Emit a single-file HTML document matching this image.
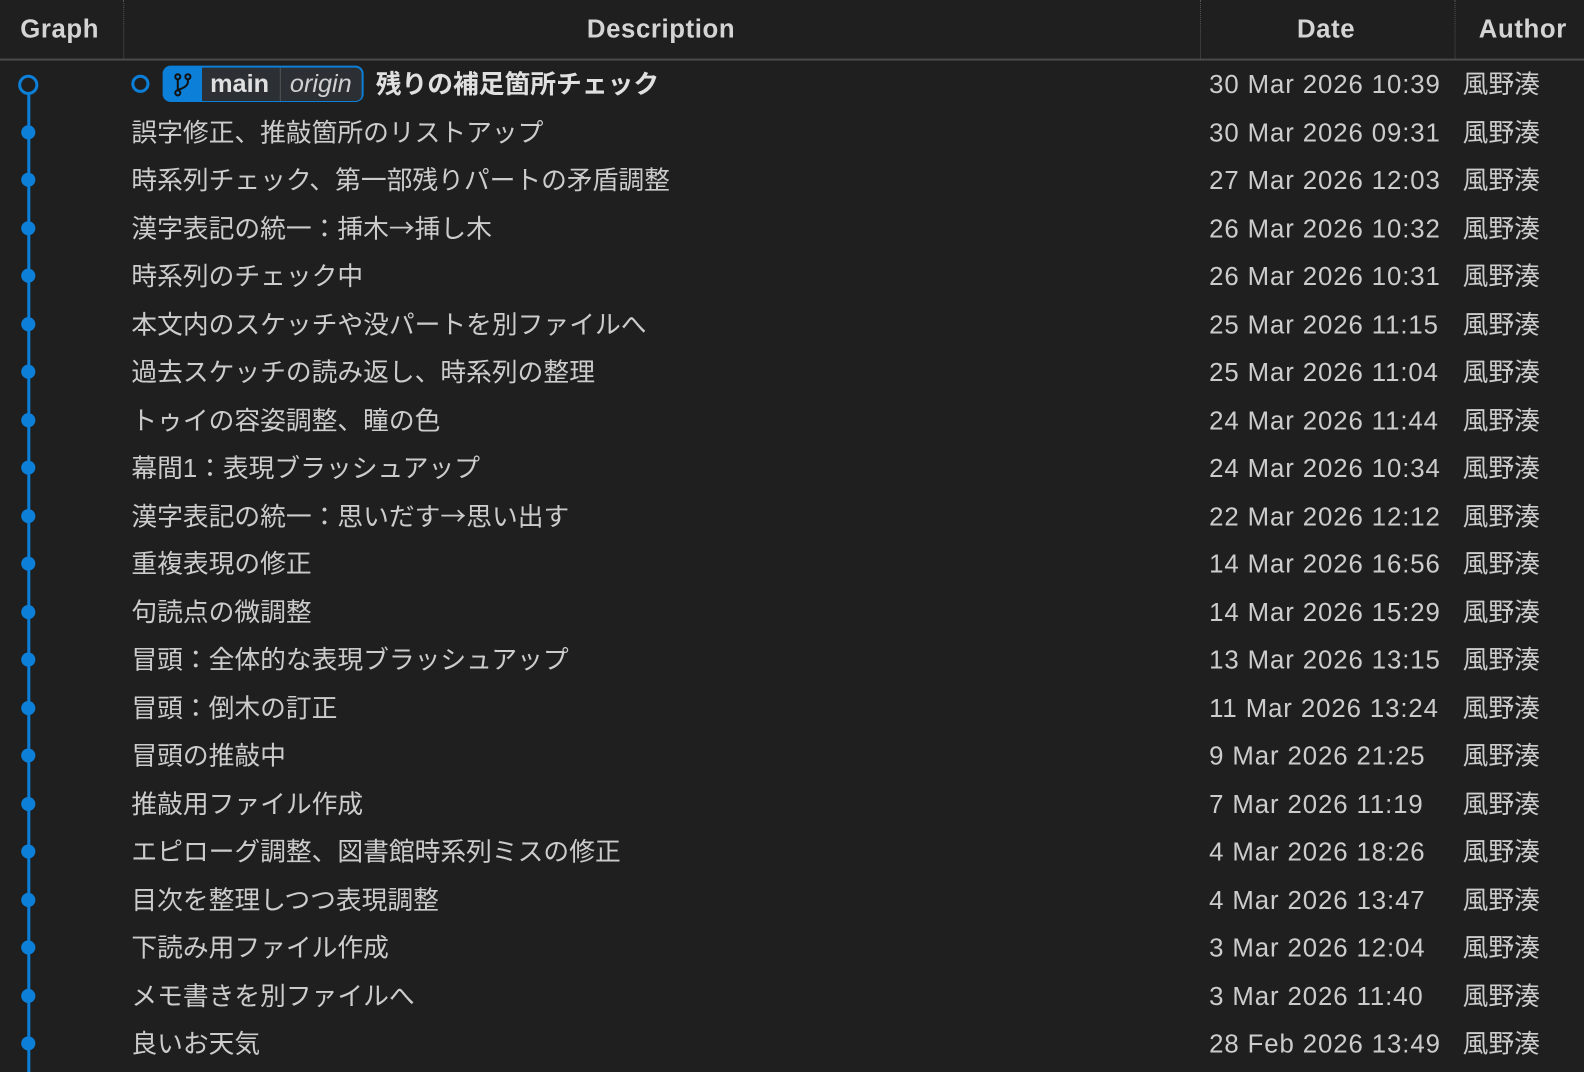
<!DOCTYPE html>
<html><head><meta charset="utf-8"><style>
html,body{margin:0;padding:0;background:#1f1f1f;width:1584px;height:1072px;overflow:hidden}
body{font-family:"Liberation Sans","Noto Sans CJK JP",sans-serif;color:#cccccc;position:relative}
#w{position:absolute;left:0;top:0;width:1570px;height:1062px;transform:scale(1.0101);transform-origin:0 0}
.h{position:absolute;top:0;height:58px;line-height:58px;font-weight:bold;font-size:25.5px;letter-spacing:0.6px;color:#d4d4d4}
.hl{position:absolute;top:58px;left:0;width:1600px;height:2px;background:#4a4a4a}
.sep{position:absolute;top:0;height:58px;border-left:1px dotted #555}
.r{position:absolute;left:0;width:1584px;height:47.5px;font-size:25.5px;line-height:47.5px;white-space:nowrap}
.d{position:absolute;left:130px;top:2px}
.t{position:absolute;left:1197px;top:2px;font-family:"Liberation Sans",sans-serif;letter-spacing:0.9px}
.a{position:absolute;left:1448px;top:2px}
.j{font-family:"Noto Sans CJK JP",sans-serif;line-height:0;vertical-align:baseline}
.dot{position:absolute;left:21px;top:16.5px;width:14px;height:14px;border-radius:50%;background:#0c7fd8}
.line{position:absolute;left:26.5px;width:3.5px;background:#0c7fd8}
.badge{position:absolute;left:161px;top:65px;width:199px;height:36px;border:1px solid #0c7fd8;border-radius:8px;background:#0c7fd8;box-sizing:border-box;overflow:hidden}
.bd{position:absolute;left:38px;top:1px;width:158px;height:33px;background:#2c3034;border-radius:0 6px 6px 0}
</style></head><body><div id="w">
<div class="h" style="left:20px">Graph</div>
<div class="h" style="left:581px">Description</div>
<div class="h" style="left:1284px">Date</div>
<div class="h" style="left:1464px">Author</div>
<div class="sep" style="left:122px"></div>
<div class="sep" style="left:1188px"></div>
<div class="sep" style="left:1440px"></div>
<div class="hl"></div>
<div class="line" style="top:93px;height:979px"></div>
<div style="position:absolute;left:18px;top:74px;width:14px;height:14px;border:3px solid #0c7fd8;border-radius:50%;background:#1f1f1f"></div>
<div style="position:absolute;left:130px;top:74px;width:12px;height:12px;border:3px solid #0c7fd8;border-radius:50%"></div>
<div class="badge"><svg style="position:absolute;left:8px;top:5px" width="22" height="26" viewBox="0 0 22 26"><g fill="none" stroke="#111" stroke-width="2"><circle cx="6" cy="5" r="2.5"/><circle cx="16" cy="5" r="2.5"/><circle cx="6" cy="21" r="2.5"/><path d="M6 7.5V18.5M16 7.5V10Q16 15 6 18"/></g></svg>
<div class="bd"><div style="position:absolute;left:8px;top:0;line-height:33px;font-weight:bold;font-size:25px;color:#e0e0e0">main</div><div style="position:absolute;left:77px;top:0;width:1px;height:33px;background:#555"></div><div style="position:absolute;left:87px;top:0;line-height:33px;font-style:italic;font-size:25px;color:#d0d0d0">origin</div></div></div>
<div class="r" style="top:59px"><span class="d" style="left:372px;font-weight:bold;color:#e0e0e0">残りの補足箇所チェック</span><span class="t">30 Mar 2026 10:39</span><span class="a">風野湊</span></div>
<div class="r" style="top:107px"><div class="dot"></div><span class="d">誤字修正、推敲箇所のリストアップ</span><span class="t">30 Mar 2026 09:31</span><span class="a">風野湊</span></div>
<div class="r" style="top:154px"><div class="dot"></div><span class="d">時系列チェック、第一部残りパートの矛盾調整</span><span class="t">27 Mar 2026 12:03</span><span class="a">風野湊</span></div>
<div class="r" style="top:202px"><div class="dot"></div><span class="d">漢字表記の統一：挿木<span class="j">→</span>挿し木</span><span class="t">26 Mar 2026 10:32</span><span class="a">風野湊</span></div>
<div class="r" style="top:249px"><div class="dot"></div><span class="d">時系列のチェック中</span><span class="t">26 Mar 2026 10:31</span><span class="a">風野湊</span></div>
<div class="r" style="top:297px"><div class="dot"></div><span class="d">本文内のスケッチや没パートを別ファイルへ</span><span class="t">25 Mar 2026 11:15</span><span class="a">風野湊</span></div>
<div class="r" style="top:344px"><div class="dot"></div><span class="d">過去スケッチの読み返し、時系列の整理</span><span class="t">25 Mar 2026 11:04</span><span class="a">風野湊</span></div>
<div class="r" style="top:392px"><div class="dot"></div><span class="d">トゥイの容姿調整、瞳の色</span><span class="t">24 Mar 2026 11:44</span><span class="a">風野湊</span></div>
<div class="r" style="top:439px"><div class="dot"></div><span class="d">幕間1：表現ブラッシュアップ</span><span class="t">24 Mar 2026 10:34</span><span class="a">風野湊</span></div>
<div class="r" style="top:487px"><div class="dot"></div><span class="d">漢字表記の統一：思いだす<span class="j">→</span>思い出す</span><span class="t">22 Mar 2026 12:12</span><span class="a">風野湊</span></div>
<div class="r" style="top:534px"><div class="dot"></div><span class="d">重複表現の修正</span><span class="t">14 Mar 2026 16:56</span><span class="a">風野湊</span></div>
<div class="r" style="top:582px"><div class="dot"></div><span class="d">句読点の微調整</span><span class="t">14 Mar 2026 15:29</span><span class="a">風野湊</span></div>
<div class="r" style="top:629px"><div class="dot"></div><span class="d">冒頭：全体的な表現ブラッシュアップ</span><span class="t">13 Mar 2026 13:15</span><span class="a">風野湊</span></div>
<div class="r" style="top:677px"><div class="dot"></div><span class="d">冒頭：倒木の訂正</span><span class="t">11 Mar 2026 13:24</span><span class="a">風野湊</span></div>
<div class="r" style="top:724px"><div class="dot"></div><span class="d">冒頭の推敲中</span><span class="t">9 Mar 2026 21:25</span><span class="a">風野湊</span></div>
<div class="r" style="top:772px"><div class="dot"></div><span class="d">推敲用ファイル作成</span><span class="t">7 Mar 2026 11:19</span><span class="a">風野湊</span></div>
<div class="r" style="top:819px"><div class="dot"></div><span class="d">エピローグ調整、図書館時系列ミスの修正</span><span class="t">4 Mar 2026 18:26</span><span class="a">風野湊</span></div>
<div class="r" style="top:867px"><div class="dot"></div><span class="d">目次を整理しつつ表現調整</span><span class="t">4 Mar 2026 13:47</span><span class="a">風野湊</span></div>
<div class="r" style="top:914px"><div class="dot"></div><span class="d">下読み用ファイル作成</span><span class="t">3 Mar 2026 12:04</span><span class="a">風野湊</span></div>
<div class="r" style="top:962px"><div class="dot"></div><span class="d">メモ書きを別ファイルへ</span><span class="t">3 Mar 2026 11:40</span><span class="a">風野湊</span></div>
<div class="r" style="top:1009px"><div class="dot"></div><span class="d">良いお天気</span><span class="t">28 Feb 2026 13:49</span><span class="a">風野湊</span></div>
</div></body></html>
